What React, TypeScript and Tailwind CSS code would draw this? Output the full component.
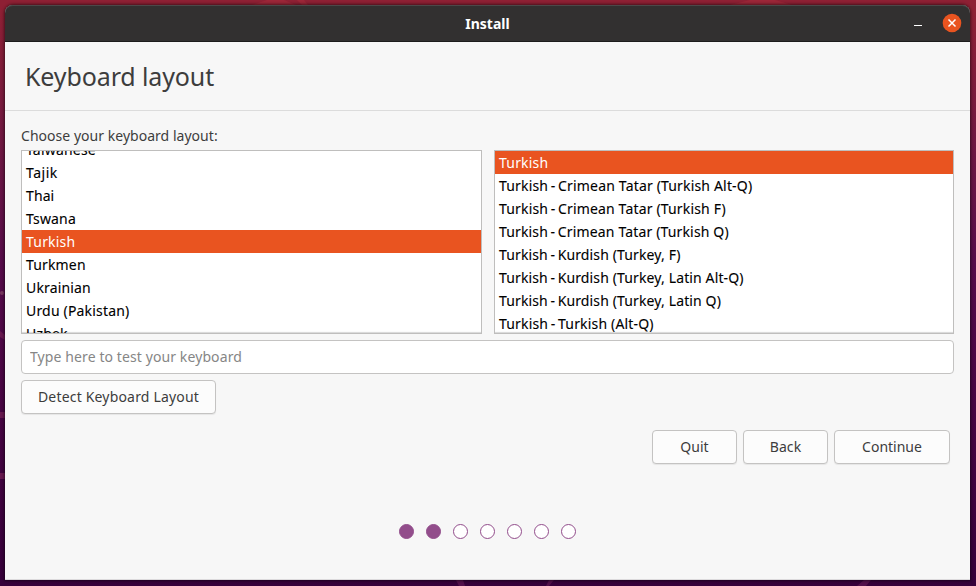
import React from "react";

type Row = { label: string; detail?: string; tracking: string };

const languages: Row[] = [
  { label: "Taiwanese", tracking: "tracking-[0.2px]" },
  { label: "Tajik", tracking: "tracking-[0.5px]" },
  { label: "Thai", tracking: "tracking-[0.1px]" },
  { label: "Tswana", tracking: "tracking-[0.15px]" },
  { label: "Turkish", tracking: "tracking-[0.2px]" },
  { label: "Turkmen", tracking: "tracking-[0.15px]" },
  { label: "Ukrainian", tracking: "tracking-[0.15px]" },
  { label: "Urdu (Pakistan)", tracking: "tracking-[0.18px]" },
  { label: "Uzbek", tracking: "tracking-[0.2px]" },
];

const variants: Row[] = [
  { label: "Turkish", tracking: "tracking-[0.2px]" },
  { label: "Turkish", detail: "Crimean Tatar (Turkish Alt-Q)", tracking: "tracking-[0.17px]" },
  { label: "Turkish", detail: "Crimean Tatar (Turkish F)", tracking: "tracking-[0.16px]" },
  { label: "Turkish", detail: "Crimean Tatar (Turkish Q)", tracking: "tracking-[0.15px]" },
  { label: "Turkish", detail: "Kurdish (Turkey, F)", tracking: "tracking-[0.13px]" },
  { label: "Turkish", detail: "Kurdish (Turkey, Latin Alt-Q)", tracking: "tracking-[0.13px]" },
  { label: "Turkish", detail: "Kurdish (Turkey, Latin Q)", tracking: "tracking-[0.13px]" },
  { label: "Turkish", detail: "Turkish (Alt-Q)", tracking: "tracking-[0.17px]" },
];

function List({ rows, width, offset }: { rows: Row[]; width: string; offset: string }) {
  return (
    <div className={`${width} h-[184px] overflow-hidden border border-[#bfbebd] bg-white shadow-[inset_0_-2px_1px_-1px_#d8d8d8]`}>
      <ul className={offset}>
        {rows.map((row) => {
          const selected = row.label === "Turkish" && !row.detail;
          return (
            <li
              key={row.label + (row.detail ?? "")}
              className={`h-[23px] whitespace-pre pl-1 text-[14px] leading-[23px] ${row.tracking} ${
                selected ? "bg-[#e95420] text-white" : "text-black [-webkit-text-stroke:0.1px_black]"
              }`}
            >
              {row.label}
              {row.detail && <span className="[word-spacing:-1.2px]"> - </span>}
              {row.detail}
            </li>
          );
        })}
      </ul>
    </div>
  );
}

function Button({ label, width, tracking }: { label: string; width: string; tracking: string }) {
  return (
    <button
      className={`${width} ${tracking} h-[34px] shrink-0 whitespace-nowrap rounded border border-[#c4c3c2] bg-[#fcfcfc] text-[14px] leading-[32px] text-[#3d3d3d] shadow-[0_1px_1px_rgba(0,0,0,0.07)]`}
    >
      {label}
    </button>
  );
}

function Wallpaper() {
  return (
    <svg className="absolute inset-0" width="976" height="586" viewBox="0 0 976 586">
      <path d="M252 5L267 0H284L296 5ZM297 0H304L308 5H302ZM730 5L750 0H775L792 5Z" fill="#9c2638" />
      <path d="M0 331L5 335V340L0 337ZM0 412H5V418H0ZM0 473H5V479H0Z" fill="#681850" />
      <circle cx="2" cy="293" r="2" fill="#78375f" />
      <path d="M456 580H463L465 586H459ZM549 580H554L549 586H546ZM864 580H871L866 586H857Z" fill="#53104b" />
    </svg>
  );
}

export default function App() {
  return (
    <div className="relative h-[586px] w-[976px] overflow-hidden bg-linear-to-b from-[#8e2034] from-2% via-[#560b4a] via-45% to-[#36003a] px-[5px] pt-[5px] font-['Noto_Sans','Open_Sans',sans-serif]">
      <Wallpaper />
      <main className="relative flex h-[575px] w-[965px] flex-col rounded-t-lg border-b border-[#dcdadc] bg-[#f7f7f7] shadow-[0_0_3px_1px_rgba(0,0,0,0.5)]">
        <header className="flex h-[37px] shrink-0 items-center rounded-t-lg border-b border-[#1d1c1c] bg-[#323030] pr-2 shadow-[inset_0_1px_#4b4949]">
          <h1 className="flex-1 pl-14 text-center text-[14px] font-bold text-white">Install</h1>
          <button className="flex h-[19px] w-[8px] items-end pb-[7px]" aria-label="Minimize">
            <span className="block h-px w-2 bg-white" />
          </button>
          <button className="mb-px ml-5 size-5" aria-label="Close">
            <svg width="20" height="20" viewBox="0 0 20 20">
              <circle cx="10" cy="10" r="9.3" fill="#e95420" />
              <path d="M6.5 6.5L13.5 13.5M13.5 6.5L6.5 13.5" stroke="white" strokeWidth="1.5" />
            </svg>
          </button>
        </header>
        <section className="flex h-[69px] shrink-0 items-center border-b border-[#dcdcdc] pl-5">
          <h2 className="text-[25px] leading-8 tracking-[-0.12px] text-[#3d3d3d]">Keyboard layout</h2>
        </section>
        <section className="flex flex-col items-start pl-4 pt-[14px]">
          <p className="h-[25px] text-[14px] leading-[22px] tracking-[0.03px] text-[#3d3d3d]">
            Choose your keyboard layout:
          </p>
          <div className="flex gap-3">
            <List rows={languages} width="w-[461px]" offset="-mt-[13px]" />
            <List rows={variants} width="w-[460px]" offset="" />
          </div>
          <input
            className="mt-1.5 h-[34px] w-[933px] rounded border border-[#c4c3c2] bg-white px-2 pb-0.5 text-[14px] tracking-[0.1px] placeholder:text-[#868686]"
            placeholder="Type here to test your keyboard"
          />
          <div className="mt-1.5 flex">
            <Button label="Detect Keyboard Layout" width="w-[195px]" tracking="tracking-[0.18px]" />
          </div>
        </section>
        <nav className="mt-4 flex justify-end gap-1.5 pr-5">
          <Button label="Quit" width="w-[85px]" tracking="tracking-normal" />
          <Button label="Back" width="w-[85px]" tracking="tracking-[0.1px]" />
          <Button label="Continue" width="w-[116px]" tracking="tracking-normal" />
        </nav>
        <ol className="mt-[60px] flex gap-3 pl-[394px]">
          {[1, 2, 3, 4, 5, 6, 7].map((step) => (
            <li
              key={step}
              className={`size-[15px] rounded-full border border-[#924d8b] ${step <= 2 ? "bg-[#924d8b]" : "bg-white"}`}
            />
          ))}
        </ol>
      </main>
    </div>
  );
}
